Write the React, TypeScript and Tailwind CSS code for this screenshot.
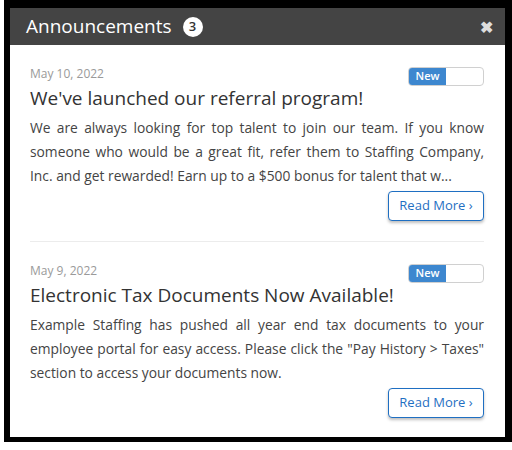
import React from "react";

type Item = {
  date: string;
  title: string;
  body: string;
};

const items: Item[] = [
  {
    date: "May 10, 2022",
    title: "We've launched our referral program!",
    body:
      "We are always looking for top talent to join our team. If you know someone who would be a great fit, refer them to Staffing Company, Inc. and get rewarded! Earn up to a $500 bonus for talent that w...",
  },
  {
    date: "May 9, 2022",
    title: "Electronic Tax Documents Now Available!",
    body:
      'Example Staffing has pushed all year end tax documents to your employee portal for easy access. Please click the "Pay History > Taxes" section to access your documents now.',
  },
];

function NewToggle() {
  return (
    <div className="mt-[1px] flex h-[19px] w-[76px] overflow-hidden rounded-[4px] border border-[#d0d0d0] bg-white">
      <div className="flex w-[37px] items-center justify-center bg-[#3d87cf] text-[11px] font-semibold text-white">
        New
      </div>
    </div>
  );
}

function AnnouncementCard({ item, last }: { item: Item; last: boolean }) {
  return (
    <div className={last ? "pt-[21px] pb-[19px]" : "pt-[21px] pb-[20px] border-b border-[#ececec]"}>
      <div className="flex h-[16px] items-start justify-between">
        <div className="text-[12px] leading-[16px] text-[#9a9a9a]">{item.date}</div>
        <NewToggle />
      </div>
      <h3 className="mt-[4px] text-[19px] leading-[24px] text-[#333333]">{item.title}</h3>
      <p className="mt-[6px] text-justify text-[13.8px] leading-[24px] text-[#444444]">{item.body}</p>
      <div className="mt-[3px] flex justify-end">
        <button className="h-[30px] w-[96px] rounded-[4px] border border-[#1f6fc2] bg-white text-[13px] text-[#1f6fc2] shadow-[0_2px_3px_rgba(0,0,0,0.25)]">
          Read More ›
        </button>
      </div>
    </div>
  );
}

export default function App() {
  return (
    <div className="h-[450px] w-[512px] bg-white font-['Open_Sans',sans-serif]">
      <div className="ml-[4px] w-[508px] bg-black pl-[6px] pt-[8px] pr-[7px] pb-[5px]">
        <div className="bg-white">
          <div className="flex h-[37px] items-center bg-[#444444] pl-[16px] pr-[12px]">
            <span className="text-[19px] text-white">Announcements</span>
            <span className="ml-[11px] flex h-[20px] w-[20px] items-center justify-center rounded-full bg-white text-[13px] font-semibold text-[#333333]">
              3
            </span>
            <span className="ml-auto text-[16px] font-bold leading-none text-[#dddddd]">✖</span>
          </div>
          <div className="pl-[20px] pr-[21px]">
            {items.map((item, i) => (
              <AnnouncementCard key={i} item={item} last={i === items.length - 1} />
            ))}
          </div>
        </div>
      </div>
    </div>
  );
}
